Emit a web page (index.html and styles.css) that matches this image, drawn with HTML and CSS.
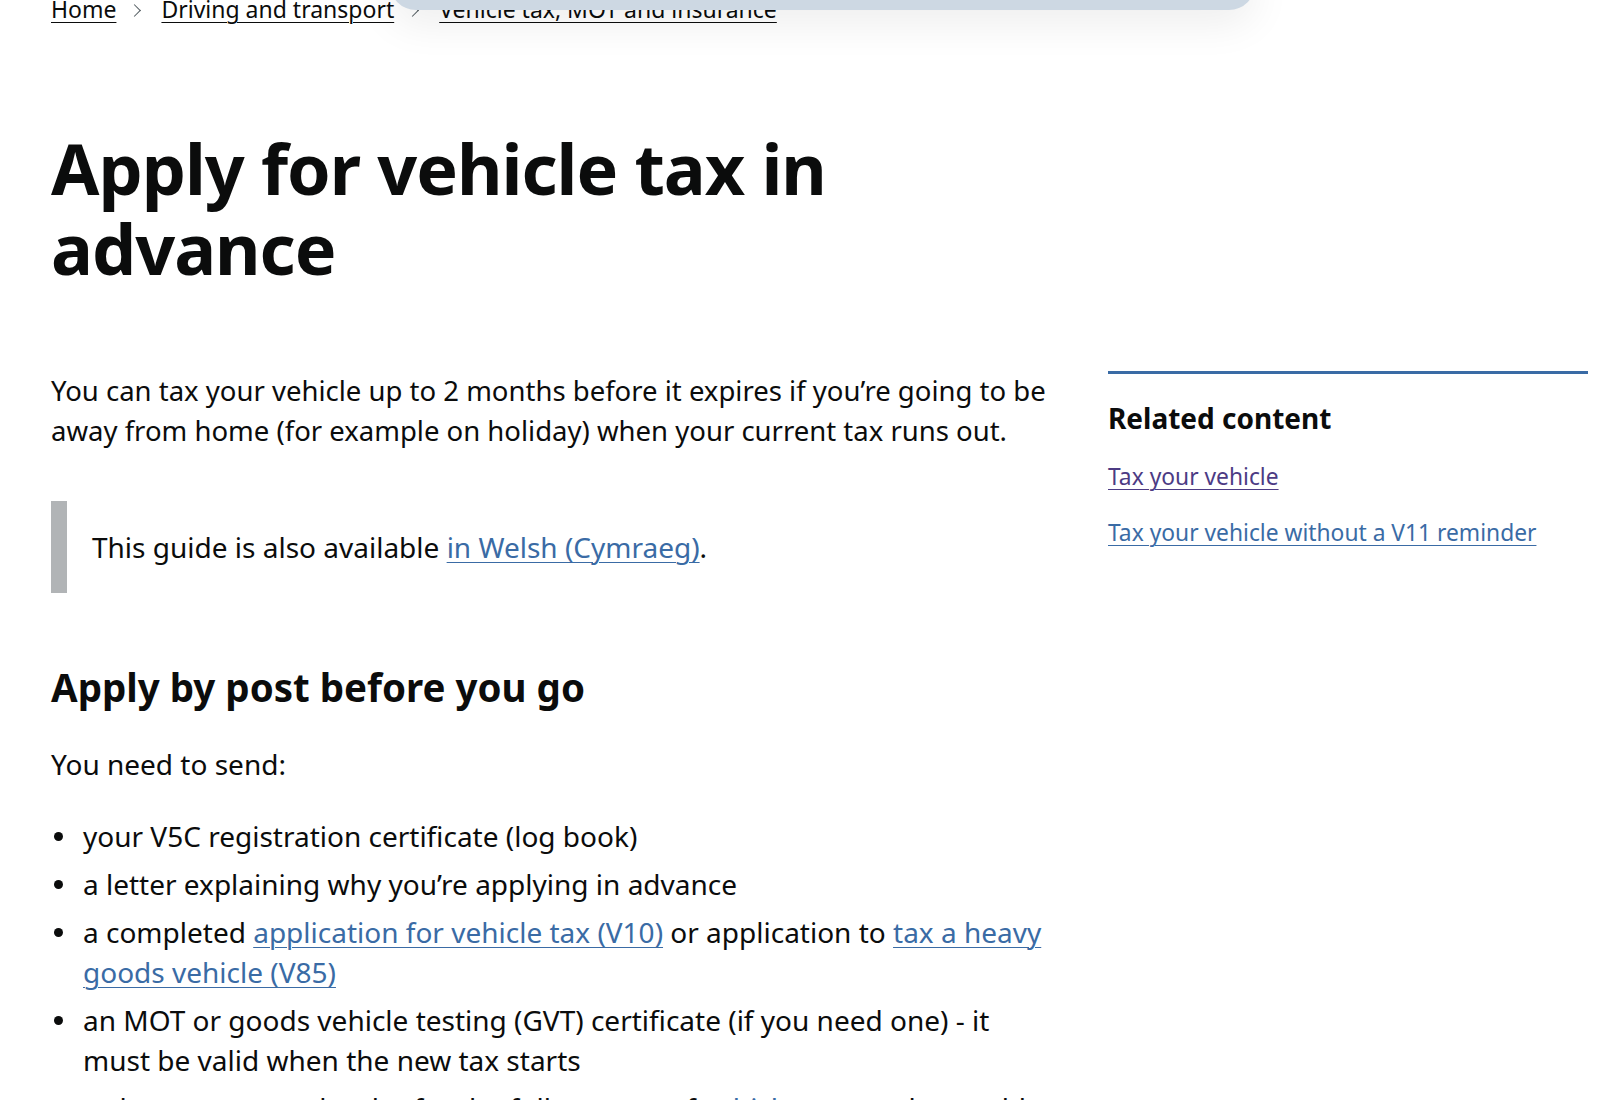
FILE: index.html
```html
<!DOCTYPE html>
<html lang="en">
<head>
<meta charset="utf-8">
<title>Apply for vehicle tax in advance - GOV.UK</title>
<link rel="stylesheet" href="styles.css">
</head>
<body>
<div class="toolbar-overlay"></div>
<div class="page">
  <nav class="breadcrumbs">
    <ol>
      <li><a href="#">Home</a></li>
      <li><span class="chev"></span><a href="#">Driving and transport</a></li>
      <li><span class="chev"></span><a href="#">Vehicle tax, MOT and insurance</a></li>
    </ol>
  </nav>

  <h1 class="title">Apply for vehicle tax in advance</h1>

  <div class="grid">
    <main class="main">
      <p class="body lead">You can tax your vehicle up to 2 months before it expires if you’re going to be away from home (for example on holiday) when your current tax runs out.</p>

      <div class="inset">This guide is also available <a href="#" class="link">in Welsh (Cymraeg)</a>.</div>

      <h2 class="section">Apply by post before you go</h2>
      <p class="body intro">You need to send:</p>
      <ul class="bullets">
        <li>your V5C registration certificate (log book)</li>
        <li>a letter explaining why you’re applying in advance</li>
        <li>a completed <a href="#" class="link">application for vehicle tax (V10)</a> or application to <a href="#" class="link">tax a heavy goods vehicle (V85)</a></li>
        <li>an MOT or goods vehicle testing (GVT) certificate (if you need one) - it must be valid when the new tax starts</li>
        <li>a cheque or postal order for the full amount of <a href="#" class="link">vehicle tax</a>, made payable to ‘DVLA, Swansea’</li>
      </ul>
    </main>

    <aside class="related">
      <h2 class="related-title">Related content</h2>
      <ul class="related-list">
        <li><a href="#" class="link visited">Tax your vehicle</a></li>
        <li><a href="#" class="link">Tax your vehicle without a V11 reminder</a></li>
      </ul>
    </aside>
  </div>
</div>
</body>
</html>
```
FILE: styles.css
```css
* { box-sizing: border-box; }

html, body {
  margin: 0;
  padding: 0;
  background: #ffffff;
  overflow: hidden;
}

body {
  font-family: "Noto Sans", "Liberation Sans", sans-serif;
  color: #0b0c0c;
}

.toolbar-overlay {
  position: absolute;
  top: -40px;
  left: 390px;
  width: 865px;
  height: 50px;
  background: #cdd8e3;
  border-radius: 0 0 26px 26px;
  box-shadow: 0 14px 40px rgba(0, 0, 0, 0.07);
  z-index: 5;
}

.page {
  padding: 0 12px 0 51px;
}

.breadcrumbs {
  margin-top: -8px;
  font-size: 23px;
  line-height: 34px;
}

.breadcrumbs ol {
  list-style: none;
  margin: 0;
  padding: 0;
  display: flex;
  align-items: center;
}

.breadcrumbs li {
  display: flex;
  align-items: center;
}

.breadcrumbs a {
  color: #0b0c0c;
  text-decoration: underline;
  text-decoration-thickness: 1px;
  text-underline-offset: 4px;
}

.chev {
  display: inline-block;
  width: 9px;
  height: 9px;
  border-top: 1.5px solid #505a5f;
  border-right: 1.5px solid #505a5f;
  transform: rotate(45deg);
  margin: 2px 22px 0 14px;
}

.title {
  font-size: 70px;
  line-height: 80px;
  font-weight: 700;
  letter-spacing: -1px;
  margin: 102px 0 0;
  max-width: 900px;
}

.grid {
  display: grid;
  grid-template-columns: 1000px 480px;
  column-gap: 57px;
  margin-top: 83px;
}

.body {
  font-size: 28px;
  line-height: 40px;
  margin: 0;
}

.body.lead {
  font-size: 27.5px;
}

.link {
  color: #3a6ba5;
  text-decoration: underline;
  text-decoration-thickness: 1px;
  text-underline-offset: 4px;
}

.link.visited {
  color: #4c3b84;
}

.inset {
  margin-top: 50px;
  border-left: 16px solid #b1b4b6;
  padding: 26px 0 26px 25px;
  font-size: 28px;
  line-height: 40px;
}

.section {
  font-size: 38.5px;
  line-height: 48px;
  font-weight: 700;
  margin: 70px 0 0;
}

.body.intro {
  margin-top: 33px;
}

.bullets {
  list-style: none;
  margin: 32px 0 0;
  padding: 0;
  font-size: 28px;
  line-height: 40px;
}

.bullets li {
  position: relative;
  padding-left: 32px;
  margin-bottom: 8px;
}

.bullets li::before {
  content: "";
  position: absolute;
  left: 3px;
  top: 16px;
  width: 9px;
  height: 9px;
  border-radius: 50%;
  background: #0b0c0c;
}

.related {
  border-top: 3px solid #3a6ba5;
  padding-top: 26px;
}

.related-title {
  font-size: 28px;
  line-height: 36px;
  font-weight: 700;
  margin: 0;
}

.related-list {
  list-style: none;
  margin: 25px 0 0;
  padding: 0;
  font-size: 22.8px;
  line-height: 32px;
}

.related-list li {
  margin-bottom: 24px;
}
```
